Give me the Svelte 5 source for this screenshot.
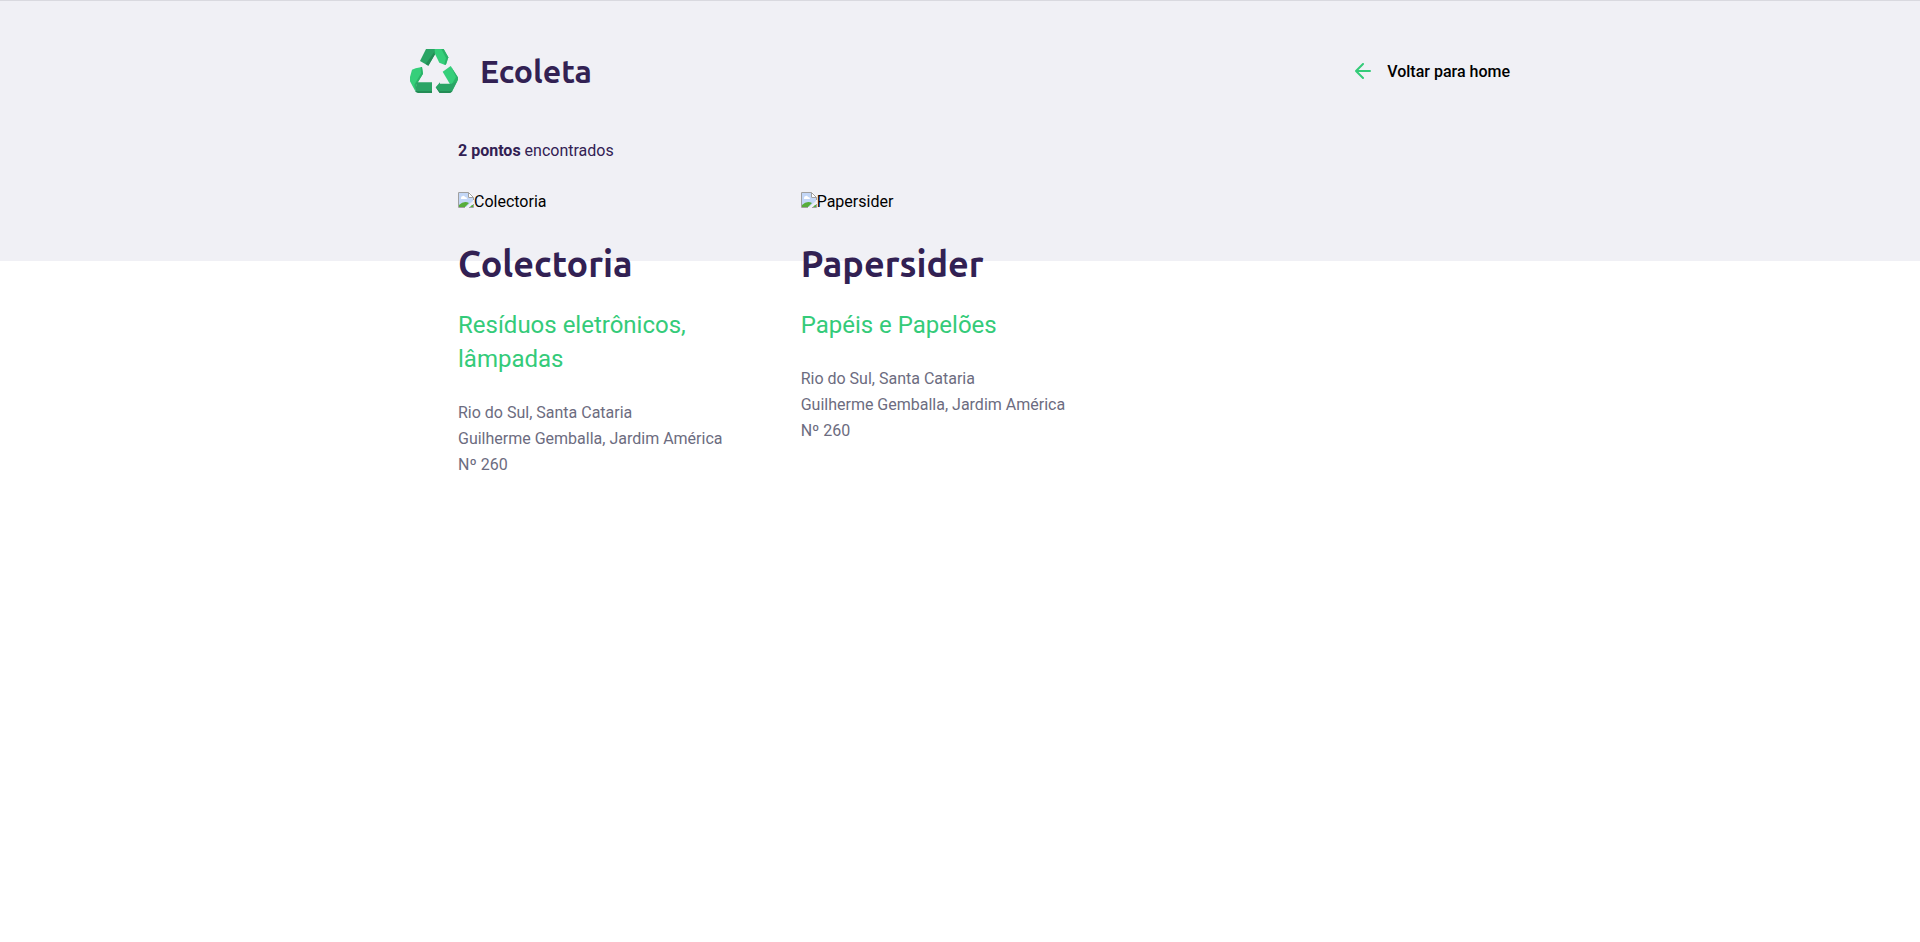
<script>
  const points = [
    {
      name: 'Colectoria',
      items: 'Resíduos eletrônicos, lâmpadas',
      address: ['Rio do Sul, Santa Cataria', 'Guilherme Gemballa, Jardim América', 'Nº 260']
    },
    {
      name: 'Papersider',
      items: 'Papéis e Papelões',
      address: ['Rio do Sul, Santa Cataria', 'Guilherme Gemballa, Jardim América', 'Nº 260']
    }
  ];
</script>

<div class="page">
  <div class="container">
    <header>
      <a class="brand" href="#home">
        <svg width="48" height="44" viewBox="30 27 144 132" aria-hidden="true">
          <path fill="#2aa465" d="M78 27h28v14L85 77 60 63z" />
          <path fill="#238c55" d="M105 33v10L85 77l-8-5z" />
          <path fill="#35cf7a" d="M104 27h27l14 25-6 20-4 3-17-7-14-28z" />
          <path fill="#2bb368" d="M124 27h7l14 25-8 23-4-3 5-18z" />
          <path fill="#35cf7a" d="M36 89l11-4 19-4 3 20-20 33-3 20-16-30v-13z" />
          <path fill="#2bb368" d="M62 82l4-1 3 20-20 33-3 20-3-20 20-34z" />
          <path fill="#2aa465" d="M50 127h46v26H54l-8 2z" />
          <path fill="#238c55" d="M46 153h50v6H54q-5 0-8-6z" />
          <path fill="#35cf7a" d="M128 95l24-17 20 33-17 30z" />
          <path fill="#2bb368" d="M152 78l22 34v8l-18 35-4-17 16-27z" />
          <path fill="#2aa465" d="M107 142l13-15v4h35l15-6-14 28q-3 6-9 6h-28z" />
          <path fill="#238c55" d="M107 142l12 11h38q-3 6-9 6h-29z" />
        </svg>
        <span>Ecoleta</span>
      </a>
      <a class="back" href="#home">
        <svg width="16" height="16" viewBox="0 0 16 16" fill="none" stroke="#34cb79" stroke-width="2" stroke-linecap="round" stroke-linejoin="round" aria-hidden="true">
          <path d="M15 8H1M8 15L1 8l7-7" />
        </svg>
        Voltar para home
      </a>
    </header>

    <main>
      <h4><strong>2 pontos</strong> encontrados</h4>
      <div class="cards">
        {#each points as point}
          <article>
            <div class="photo">
              <svg width="16" height="16" viewBox="0 0 16 16" aria-hidden="true">
                <path fill="#fff" d="M0 0h11l5 5v11H0z" />
                <path fill="#c3d7f7" d="M1 1h9v5h5v9H1z" />
                <path fill="#fff" d="M3 6q0-2 2-2 1-1 2 1 2 0 2 2H3z" />
                <path fill="#56ad3a" d="M1 15v-2q5-5 10-2l-4 4z" />
                <path fill="#f0f0f5" d="M7 16l9-8v3l-5 5z" />
                <path fill="#56ad3a" d="M12 15l2-2h1v2z" />
                <path fill="none" stroke="#a0a0a0" d="M7 15.500H.5V.5h10l5 5V8M10.500.5v5h5M15.500 12v3.500H11" />
              </svg>
              <span>{point.name}</span>
            </div>
            <h1>{point.name}</h1>
            <h3>{point.items}</h3>
            <p>
              {#each point.address as line}
                <span>{line}</span>
              {/each}
            </p>
          </article>
        {/each}
      </div>
    </main>
  </div>
</div>

<style>
  :global(body) {
    margin: 0;
    background: #fff;
  }

  .page {
    box-sizing: border-box;
    border-top: 1px solid #d9d9df;
    background: linear-gradient(#f0f0f5, #f0f0f5) top / 100% 260px no-repeat;
    font-family: Roboto, sans-serif;
    font-size: 16px;
    color: #000;
  }

  .container {
    max-width: 1100px;
    margin: 0 auto;
  }

  header {
    display: flex;
    justify-content: space-between;
    align-items: center;
    padding-top: 48px;
  }

  a {
    display: flex;
    align-items: center;
    text-decoration: none;
  }

  .brand {
    gap: 22px;
    height: 44px;
    color: #322153;
    font: 700 32px/44px Ubuntu, "Noto Sans", sans-serif;
  }

  .back {
    gap: 16px;
    color: #000;
    font-weight: 500;
  }

  main {
    padding: 48px;
  }

  h1,
  h3,
  h4,
  p {
    margin: 0;
  }

  h4 {
    color: #322153;
    font-weight: 400;
    line-height: 19px;
  }

  strong {
    font-weight: 700;
  }

  .cards {
    display: grid;
    grid-template-columns: repeat(3, 1fr);
    gap: 24px;
    margin-top: 32px;
  }

  .photo {
    display: flex;
    height: 19px;
    line-height: 19px;
  }

  h1 {
    margin-top: 32px;
    color: #322153;
    font: 700 36px/41px Ubuntu, "Noto Sans", sans-serif;
  }

  h3 {
    margin-top: 24px;
    color: #34cb79;
    font-size: 24px;
    font-weight: 400;
    line-height: 34px;
  }

  p {
    margin-top: 24px;
    color: #6c6c80;
    line-height: 26px;
  }

  p span {
    display: block;
  }
</style>
